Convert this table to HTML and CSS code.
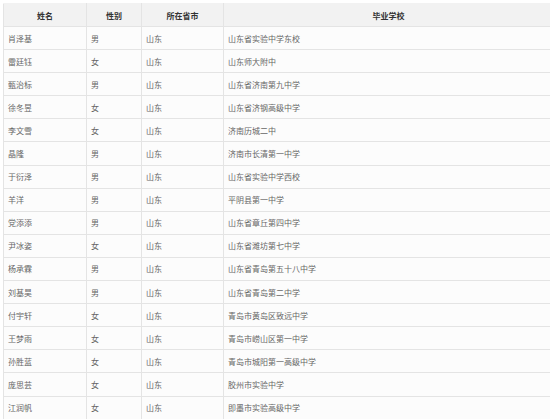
FILE: index.html
```html
<!DOCTYPE html>
<html lang="zh">
<head>
<meta charset="utf-8">
<link rel="stylesheet" href="styles.css">
</head>
<body>
<table class="grid">
  <colgroup>
    <col class="c-name"><col class="c-sex"><col class="c-city"><col class="c-school">
  </colgroup>
  <thead>
    <tr><th>姓名</th><th>性别</th><th>所在省市</th><th>毕业学校</th></tr>
  </thead>
  <tbody>
    <tr><td>肖泽基</td><td>男</td><td>山东</td><td>山东省实验中学东校</td></tr>
    <tr><td>雷廷钰</td><td>女</td><td>山东</td><td>山东师大附中</td></tr>
    <tr><td>甄治标</td><td>男</td><td>山东</td><td>山东省济南第九中学</td></tr>
    <tr><td>徐冬昱</td><td>女</td><td>山东</td><td>山东省济钢高级中学</td></tr>
    <tr><td>李文雪</td><td>女</td><td>山东</td><td>济南历城二中</td></tr>
    <tr><td>晶隆</td><td>男</td><td>山东</td><td>济南市长清第一中学</td></tr>
    <tr><td>于衍泽</td><td>男</td><td>山东</td><td>山东省实验中学西校</td></tr>
    <tr><td>羊洋</td><td>男</td><td>山东</td><td>平阴县第一中学</td></tr>
    <tr><td>党添添</td><td>男</td><td>山东</td><td>山东省章丘第四中学</td></tr>
    <tr><td>尹冰姿</td><td>女</td><td>山东</td><td>山东省潍坊第七中学</td></tr>
    <tr><td>杨承霖</td><td>男</td><td>山东</td><td>山东省青岛第五十八中学</td></tr>
    <tr><td>刘基昊</td><td>男</td><td>山东</td><td>山东省青岛第二中学</td></tr>
    <tr><td>付宇轩</td><td>女</td><td>山东</td><td>青岛市黄岛区致远中学</td></tr>
    <tr><td>王梦雨</td><td>女</td><td>山东</td><td>青岛市崂山区第一中学</td></tr>
    <tr><td>孙胜蓝</td><td>女</td><td>山东</td><td>青岛市城阳第一高级中学</td></tr>
    <tr><td>庞思芸</td><td>女</td><td>山东</td><td>胶州市实验中学</td></tr>
    <tr><td>江润帆</td><td>女</td><td>山东</td><td>即墨市实验高级中学</td></tr>
  </tbody>
</table>
</body>
</html>
```

FILE: styles.css
```css
html, body {
  margin: 0;
  padding: 0;
  background: #ffffff;
  overflow: hidden;
}
body {
  padding: 3px 0 0 3px;
  font-family: "Noto Sans CJK SC", "Microsoft YaHei", sans-serif;
  font-size: 8px;
  color: #666666;
}
.grid {
  border-collapse: collapse;
  table-layout: fixed;
  width: 550px;
  background: #fcfcfc;
}
.c-name { width: 83px; }
.c-sex { width: 55px; }
.c-city { width: 82px; }
.c-school { width: 330px; }
.grid th,
.grid td {
  border: 1px solid #e4e4e4;
  padding: 0 4px;
  text-align: left;
  white-space: nowrap;
  overflow: hidden;
}
.grid thead tr { height: 23px; }
.grid tbody tr { height: 23.1px; }
.grid th {
  background: #f2f2f2;
  color: #333333;
  font-weight: bold;
  text-align: center;
}
.grid thead th { border-top-color: #f2f2f2; border-left-color: #e4e4e4; }
```
